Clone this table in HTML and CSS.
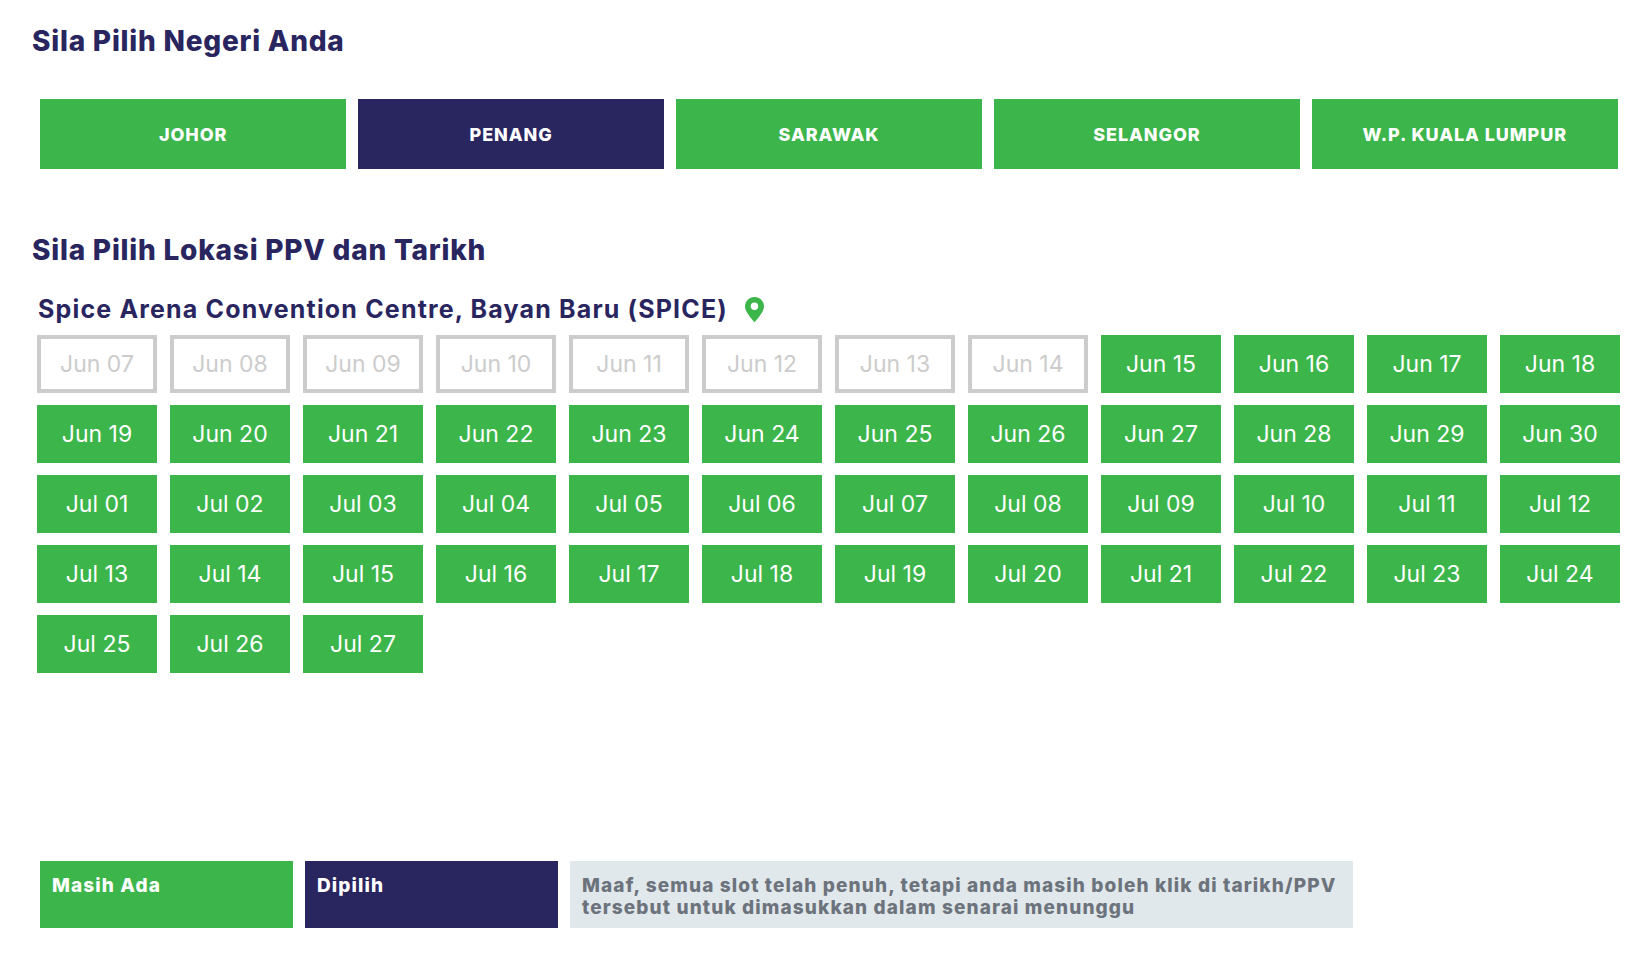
FILE: index.html
```html
<!DOCTYPE html>
<html lang="ms">
<head>
<meta charset="utf-8">
<title>Pilih Negeri</title>
<link rel="stylesheet" href="styles.css">
</head>
<body>
<div class="page">
  <h1 class="title">Sila Pilih Negeri Anda</h1>
  <div class="states">
    <div class="state">JOHOR</div>
    <div class="state active">PENANG</div>
    <div class="state">SARAWAK</div>
    <div class="state">SELANGOR</div>
    <div class="state">W.P. KUALA LUMPUR</div>
  </div>

  <h2 class="title title-2">Sila Pilih Lokasi PPV dan Tarikh</h2>
  <div class="location">
    <span class="loc-name">Spice Arena Convention Centre, Bayan Baru (SPICE)</span>
    <svg class="pin" width="19" height="25" viewBox="0 0 19 25" aria-hidden="true">
      <path d="M9.5 0C4.25 0 0 4.2 0 9.4 0 15.4 9.5 25 9.5 25S19 15.4 19 9.4C19 4.2 14.75 0 9.5 0z" fill="#3cb54b"/>
      <circle cx="9.5" cy="9.3" r="3.7" fill="#fff"/>
    </svg>
  </div>

  <div class="dates">
    <div class="date off">Jun 07</div>
    <div class="date off">Jun 08</div>
    <div class="date off">Jun 09</div>
    <div class="date off">Jun 10</div>
    <div class="date off">Jun 11</div>
    <div class="date off">Jun 12</div>
    <div class="date off">Jun 13</div>
    <div class="date off">Jun 14</div>
    <div class="date">Jun 15</div>
    <div class="date">Jun 16</div>
    <div class="date">Jun 17</div>
    <div class="date">Jun 18</div>
    <div class="date">Jun 19</div>
    <div class="date">Jun 20</div>
    <div class="date">Jun 21</div>
    <div class="date">Jun 22</div>
    <div class="date">Jun 23</div>
    <div class="date">Jun 24</div>
    <div class="date">Jun 25</div>
    <div class="date">Jun 26</div>
    <div class="date">Jun 27</div>
    <div class="date">Jun 28</div>
    <div class="date">Jun 29</div>
    <div class="date">Jun 30</div>
    <div class="date">Jul 01</div>
    <div class="date">Jul 02</div>
    <div class="date">Jul 03</div>
    <div class="date">Jul 04</div>
    <div class="date">Jul 05</div>
    <div class="date">Jul 06</div>
    <div class="date">Jul 07</div>
    <div class="date">Jul 08</div>
    <div class="date">Jul 09</div>
    <div class="date">Jul 10</div>
    <div class="date">Jul 11</div>
    <div class="date">Jul 12</div>
    <div class="date">Jul 13</div>
    <div class="date">Jul 14</div>
    <div class="date">Jul 15</div>
    <div class="date">Jul 16</div>
    <div class="date">Jul 17</div>
    <div class="date">Jul 18</div>
    <div class="date">Jul 19</div>
    <div class="date">Jul 20</div>
    <div class="date">Jul 21</div>
    <div class="date">Jul 22</div>
    <div class="date">Jul 23</div>
    <div class="date">Jul 24</div>
    <div class="date">Jul 25</div>
    <div class="date">Jul 26</div>
    <div class="date">Jul 27</div>
  </div>

  <div class="legend">
    <div class="legend-box green">Masih Ada</div>
    <div class="legend-box navy">Dipilih</div>
    <div class="legend-box grey">Maaf, semua slot telah penuh, tetapi anda masih boleh klik di tarikh/PPV tersebut untuk dimasukkan dalam senarai menunggu</div>
  </div>
</div>
</body>
</html>
```

FILE: styles.css
```css
* {
  box-sizing: border-box;
}

html, body {
  margin: 0;
  padding: 0;
  background: #ffffff;
}

body {
  font-family: Inter, "Noto Sans", "Liberation Sans", sans-serif;
  color: #29255f;
}

.page {
  padding: 24px 28px 0 32px;
}

.title {
  margin: 0;
  font-size: 28px;
  line-height: 34px;
  font-weight: 800;
  color: #29255f;
  letter-spacing: 0.78px;
}

.states {
  display: flex;
  gap: 11.5px;
  margin: 41px 4px 0 8px;
}

.state {
  flex: 1 1 0;
  height: 70px;
  display: flex;
  align-items: center;
  justify-content: center;
  background: #3cb54b;
  color: #ffffff;
  font-size: 18px;
  font-weight: 800;
  letter-spacing: 0.9px;
}

.state.active {
  background: #29255f;
}

.title-2 {
  margin-top: 64px;
}

.location {
  display: flex;
  align-items: center;
  gap: 17px;
  margin: 27px 0 0 6px;
  height: 30px;
}

.loc-name {
  font-size: 25px;
  line-height: 30px;
  font-weight: 700;
  color: #29255f;
  letter-spacing: 1.17px;
}

.pin {
  display: block;
  flex: none;
}

.dates {
  display: grid;
  grid-template-columns: repeat(12, 1fr);
  column-gap: 13px;
  row-gap: 12px;
  margin: 11px 2px 0 5px;
}

.date {
  height: 58px;
  display: flex;
  align-items: center;
  justify-content: center;
  background: #3cb54b;
  color: #ffffff;
  font-size: 23px;
  font-weight: 400;
}

.date.off {
  background: #ffffff;
  border: 4px solid #cccccc;
  color: #cccccc;
}

.legend {
  display: flex;
  gap: 12px;
  margin: 188px 0 0 8px;
}

.legend-box {
  height: 67px;
  padding: 14px 12px 0 12px;
  font-size: 19px;
  line-height: 22px;
  font-weight: 800;
  letter-spacing: 1.12px;
}

.legend-box.green {
  width: 253px;
  background: #3cb54b;
  color: #ffffff;
}

.legend-box.navy {
  width: 253px;
  background: #29255f;
  color: #ffffff;
}

.legend-box.grey {
  width: 783px;
  background: #e1e8eb;
  color: #6c737c;
}
```
